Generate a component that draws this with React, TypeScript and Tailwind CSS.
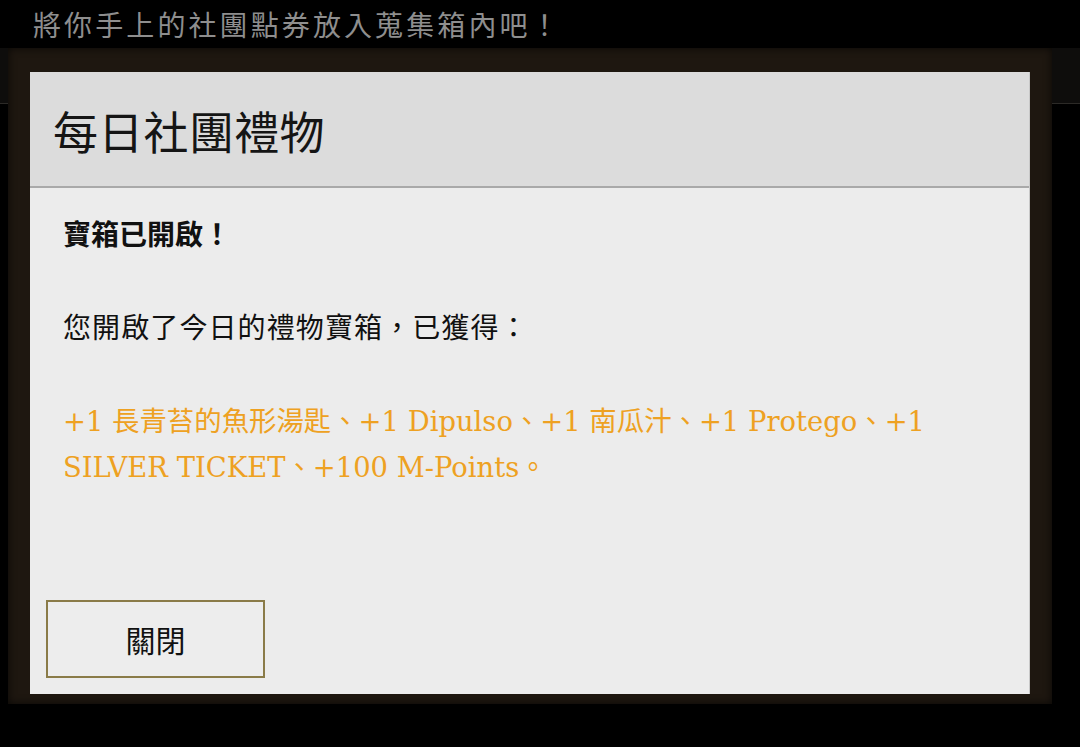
import React from "react";

const rewards = "+1 長青苔的魚形湯匙、+1 Dipulso、+1 南瓜汁、+1 Protego、+1 SILVER TICKET、+100 M-Points。";

export default function App() {
    return (
        <div className="w-[1080px] h-[747px] bg-black overflow-hidden font-['Noto_Sans_CJK_TC',sans-serif]">
            {/* top hint bar */}
            <div className="h-[48px] flex items-center pl-[33px]">
                <span className="text-[28px] leading-none tracking-[3.1px] text-[#8e8e8e]">
                    將你手上的社團點券放入蒐集箱內吧！
                </span>
            </div>

            <div className="h-[699px] bg-[linear-gradient(to_bottom,#0e0d0c_0px,#0e0d0c_55px,#2c2a27_55px,#2c2a27_56px,#000_56px)]">
                {/* brown frame */}
                <div className="ml-[8px] w-[1044px] h-[656px] bg-[#1e1710] shadow-[inset_0_0_8px_rgba(0,0,0,0.7)] pl-[22px] pt-[24px] pb-[10px]">
                    {/* dialog */}
                    <div className="w-[1000px] h-[622px] flex flex-col bg-[#ececec] border-r border-[#c8c8c8]">
                        <div className="h-[116px] shrink-0 bg-[#dcdcdc] border-b-2 border-[#a9a9a9] flex items-center pl-[23px]">
                            <h1 className="text-[45px] leading-none tracking-[0.3px] text-[#151515] font-normal pt-[2px]">每日社團禮物</h1>
                        </div>

                        <div className="flex-1 flex flex-col pl-[33px] pt-[24px]">
                            <p className="text-[28px] leading-[42px] font-bold text-[#111]">寶箱已開啟！</p>
                            <p className="mt-[51px] text-[28px] leading-[42px] tracking-[1.1px] text-[#111]">
                                您開啟了今日的禮物寶箱，已獲得：
                            </p>
                            <p className="mt-[52px] w-[900px] text-[27.4px] leading-[46px] text-[#eea122] font-['DejaVu_Serif','Noto_Sans_CJK_TC',serif]">
                                {rewards}
                            </p>
                        </div>

                        <div className="pl-[16px] pb-[16px]">
                            <button className="w-[219px] h-[78px] border-2 border-[#8a7b48] bg-[#ededed] text-[30px] text-[#111] flex items-center justify-center">
                                關閉
                            </button>
                        </div>
                    </div>
                </div>
            </div>
        </div>
    );
}
